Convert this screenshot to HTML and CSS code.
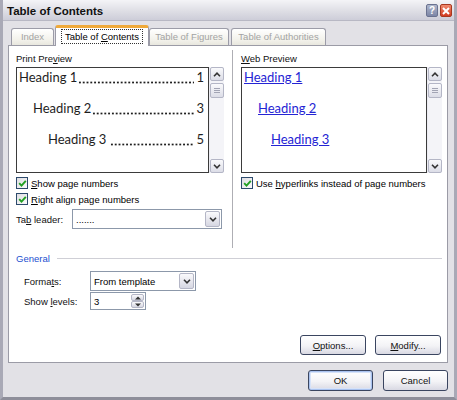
FILE: index.html
```html
<!DOCTYPE html>
<html>
<head>
<meta charset="utf-8">
<link rel="stylesheet" href="styles.css">
</head>
<body>
<div class="window">
  <div class="titlebar">
    <span class="title">Table of Contents</span>
    <span class="tbtn help">?</span>
    <span class="tbtn close"><svg width="8" height="8" viewBox="0 0 8 8"><path d="M1 1 L7 7 M7 1 L1 7" stroke="#fff" stroke-width="2"/></svg></span>
  </div>
  <div class="body">
    <div class="tabs">
      <div class="tab t-index">Index</div>
      <div class="tab sel t-toc"><span class="focus">Table of <u>C</u>ontents</span></div>
      <div class="tab t-fig">Table of Figures</div>
      <div class="tab t-auth">Table of Authorities</div>
    </div>
    <div class="panel">
      <div class="top">
        <div class="col left">
          <div class="label">Print Pre<u>v</u>iew</div>
          <div class="preview">
            <div class="pbox">
              <div class="trow l1"><span>Heading 1</span><span class="dots"></span><span class="pg">1</span></div>
              <div class="trow l2"><span>Heading 2</span><span class="dots"></span><span class="pg">3</span></div>
              <div class="trow l3"><span>Heading 3</span><span class="dots gap"></span><span class="pg">5</span></div>
            </div>
            <div class="scroll">
              <div class="sbtn"><svg width="8" height="5" viewBox="0 0 8 5"><path d="M1 4.2 L4 1.2 L7 4.2" fill="none" stroke="#333" stroke-width="1.6"/></svg></div>
              <div class="thumb"><span></span><span></span><span></span></div>
              <div class="track"></div>
              <div class="sbtn"><svg width="8" height="5" viewBox="0 0 8 5"><path d="M1 0.8 L4 3.8 L7 0.8" fill="none" stroke="#333" stroke-width="1.6"/></svg></div>
            </div>
          </div>
          <div class="chk-row first"><span class="cb"><svg width="9" height="9" viewBox="0 0 9 9"><path d="M1.2 4.2 L3.5 6.6 L7.8 1.8" fill="none" stroke="#22a022" stroke-width="1.9"/></svg></span><span><u>S</u>how page numbers</span></div>
          <div class="chk-row"><span class="cb"><svg width="9" height="9" viewBox="0 0 9 9"><path d="M1.2 4.2 L3.5 6.6 L7.8 1.8" fill="none" stroke="#22a022" stroke-width="1.9"/></svg></span><span><u>R</u>ight align page numbers</span></div>
          <div class="field-row leader">
            <span class="flabel lw">Ta<u>b</u> leader:</span>
            <div class="combo wide"><span class="cval">.......</span><span class="cbtn"><svg width="8" height="5" viewBox="0 0 8 5"><path d="M1 0.8 L4 3.8 L7 0.8" fill="none" stroke="#333" stroke-width="1.6"/></svg></span></div>
          </div>
        </div>
        <div class="vsep"></div>
        <div class="col right">
          <div class="label"><u>W</u>eb Preview</div>
          <div class="preview">
            <div class="pbox web">
              <div class="wrow l1"><a>Heading 1</a></div>
              <div class="wrow l2"><a>Heading 2</a></div>
              <div class="wrow l3"><a>Heading 3</a></div>
            </div>
            <div class="scroll">
              <div class="sbtn"><svg width="8" height="5" viewBox="0 0 8 5"><path d="M1 4.2 L4 1.2 L7 4.2" fill="none" stroke="#333" stroke-width="1.6"/></svg></div>
              <div class="thumb"><span></span><span></span><span></span></div>
              <div class="track"></div>
              <div class="sbtn"><svg width="8" height="5" viewBox="0 0 8 5"><path d="M1 0.8 L4 3.8 L7 0.8" fill="none" stroke="#333" stroke-width="1.6"/></svg></div>
            </div>
          </div>
          <div class="chk-row first"><span class="cb"><svg width="9" height="9" viewBox="0 0 9 9"><path d="M1.2 4.2 L3.5 6.6 L7.8 1.8" fill="none" stroke="#22a022" stroke-width="1.9"/></svg></span><span>Use <u>h</u>yperlinks instead of page numbers</span></div>
        </div>
      </div>
      <div class="general-head"><span>General</span><span class="gline"></span></div>
      <div class="form-rows">
        <div class="field-row">
          <span class="flabel fw">Forma<u>t</u>s:</span>
          <div class="combo fmt"><span class="cval">From template</span><span class="cbtn"><svg width="8" height="5" viewBox="0 0 8 5"><path d="M1 0.8 L4 3.8 L7 0.8" fill="none" stroke="#333" stroke-width="1.6"/></svg></span></div>
        </div>
        <div class="field-row levels">
          <span class="flabel fw">Show <u>l</u>evels:</span>
          <div class="spin"><span class="cval">3</span><span class="spbtns"><span class="spb"><svg width="6" height="4" viewBox="0 0 6 4"><path d="M0 3.5 L3 0.5 L6 3.5 Z" fill="#333"/></svg></span><span class="spb"><svg width="6" height="4" viewBox="0 0 6 4"><path d="M0 0.5 L3 3.5 L6 0.5 Z" fill="#333"/></svg></span></span></div>
        </div>
      </div>
      <div class="btnrow">
        <div class="btn"><u>O</u>ptions...</div>
        <div class="btn"><u>M</u>odify...</div>
      </div>
    </div>
    <div class="footer">
      <div class="btn big default">OK</div>
      <div class="btn big">Cancel</div>
    </div>
  </div>
</div>
</body>
</html>
```
FILE: styles.css
```css
* { box-sizing: border-box; }
body {
  margin: 0;
  font-family: "Liberation Sans", Arial, sans-serif;
  font-size: 9.5px;
  color: #000;
}
u { text-decoration: underline; text-underline-offset: 1px; }
.window {
  width: 457px;
  height: 400px;
  background: #e2e1e6;
  border-left: 3px solid #a9a9b6;
  border-right: 3px solid #a9a9b6;
  border-bottom: 3px solid #8e8e9a;
  display: flex;
  flex-direction: column;
  overflow: hidden;
}
.titlebar {
  height: 21px;
  flex: none;
  display: flex;
  align-items: center;
  padding: 1px 2px 0 4px;
  background: linear-gradient(#f4f4f7, #e2e2e8 45%, #cdcdd8);
  border-bottom: 1px solid #b8b8c4;
}
.title {
  flex: 1;
  font-weight: bold;
  font-size: 11.5px;
  color: #111;
}
.tbtn {
  width: 12px;
  height: 13px;
  border-radius: 2px;
  display: flex;
  align-items: center;
  justify-content: center;
  color: #fff;
  font-weight: bold;
  font-size: 10px;
}
.help {
  background: linear-gradient(#aeb6cc, #7d86a6);
  border: 1px solid #6a7290;
  margin-right: 2px;
}
.close {
  background: linear-gradient(#f08a6e, #d23c22);
  border: 1px solid #a8381f;
}
.body {
  padding: 4px 6px 0 5px;
  display: flex;
  flex-direction: column;
}
.tabs {
  display: flex;
  align-items: flex-end;
  height: 20px;
  position: relative;
  z-index: 1;
}
.tab {
  height: 17px;
  border: 1px solid #9c9ca8;
  border-bottom: 0;
  border-radius: 3px 3px 0 0;
  background: linear-gradient(#ffffff, #f2f1ea 70%, #e8e7de);
  color: #a3a3a3;
  text-align: center;
  line-height: 16px;
}
.t-index { width: 43px; margin-left: 3px; }
.t-toc { width: 94px; margin-left: 1px; }
.t-fig { width: 80px; }
.t-auth { width: 95px; margin-left: 2px; }
.tab.sel {
  height: 21px;
  margin-bottom: -1px;
  background: #fff;
  border-top: 3px solid #efa93a;
  color: #000;
  line-height: 16px;
  padding-top: 1px;
}
.focus {
  border: 1px dotted #333;
  padding: 0 3px;
  display: inline-block;
  line-height: 13px;
}
.panel {
  height: 318px;
  width: 440px;
  background: #fff;
  border: 1px solid #9b9ba6;
  padding: 6px 5px 0 7px;
  display: flex;
  flex-direction: column;
}
.top {
  display: flex;
  height: 200px;
  flex: none;
}
.left { width: 208px; }
.right { width: 201px; }
.vsep {
  width: 1px;
  height: 198px;
  margin: -2px 8px 0 8px;
  background: #aeaeb4;
}
.label {
  height: 13px;
  line-height: 13px;
  margin-bottom: 2px;
  color: #111;
}
.preview {
  display: flex;
  height: 106px;
}
.pbox {
  flex: 1;
  border: 1px solid #3b3b3b;
  background: #fff;
  font-family: Lato, "Open Sans", sans-serif;
  font-size: 13px;
  color: #1e1e1e;
  padding: 0 4px 0 2px;
}
.trow, .wrow {
  display: flex;
  height: 18px;
  line-height: 18px;
  margin-bottom: 13px;
  white-space: nowrap;
}
.trow.l2 { padding-left: 14px; }
.trow.l3 { padding-left: 29px; margin-top: 1px; }
.dots {
  flex: 1;
  margin: 0 2px 0 1px;
  background-image: radial-gradient(circle, #1e1e1e 0.85px, transparent 1.25px);
  background-size: 3.8px 3px;
  background-repeat: repeat-x;
  background-position: 0 12.5px;
}
.dots.gap { margin-left: 4px; }
.pbox.web { padding-left: 2px; }
.wrow a {
  color: #2424d4;
  text-decoration: underline;
}
.wrow.l2 { padding-left: 14px; }
.wrow.l3 { padding-left: 27px; }
.scroll {
  width: 15px;
  display: flex;
  flex-direction: column;
  background: #f4f4f8;
  border-left: 1px solid #ececf2;
}
.sbtn, .thumb {
  height: 14px;
  border: 1px solid #b4b6c6;
  border-radius: 2px;
  background: linear-gradient(#fafafc, #dcdde7);
  display: flex;
  align-items: center;
  justify-content: center;
}
.thumb {
  height: 15px;
  margin-top: 2px;
  flex-direction: column;
  gap: 1px;
}
.thumb span {
  display: block;
  width: 6px;
  height: 1px;
  background: #a2a4b4;
}
.track { flex: 1; }
.chk-row {
  display: flex;
  align-items: center;
  height: 16px;
}
.chk-row.first { margin-top: 2px; }
.cb {
  width: 12px;
  height: 12px;
  border: 1px solid #2d4a6c;
  background: linear-gradient(135deg, #dedee2, #fbfbfb);
  margin-right: 3px;
  display: flex;
  align-items: center;
  justify-content: center;
}
.field-row {
  display: flex;
  align-items: center;
}
.leader { margin-top: 2px; }
.flabel { color: #111; }
.lw { width: 56px; }
.fw { width: 66px; }
.combo {
  height: 20px;
  border: 1px solid #8c98aa;
  background: #fff;
  display: flex;
  align-items: center;
  padding: 1px;
}
.combo.wide { width: 150px; }
.combo.fmt { width: 106px; height: 20px; }
.cval {
  flex: 1;
  padding-left: 2px;
}
.cbtn {
  width: 15px;
  height: 100%;
  border: 1px solid #b4b6c6;
  border-radius: 2px;
  background: linear-gradient(#fafafc, #d6d7e2);
  display: flex;
  align-items: center;
  justify-content: center;
}
.levels { margin-top: 1px; }
.spin {
  width: 56px;
  height: 18px;
  border: 1px solid #8c98aa;
  background: #fff;
  display: flex;
  align-items: center;
  padding: 1px;
}
.spbtns {
  width: 13px;
  height: 100%;
  display: flex;
  flex-direction: column;
}
.spb {
  flex: 1;
  border: 1px solid #b4b6c6;
  border-radius: 2px;
  background: linear-gradient(#fafafc, #d6d7e2);
  display: flex;
  align-items: center;
  justify-content: center;
}
.general-head {
  display: flex;
  align-items: center;
  height: 13px;
  flex: none;
  color: #1c4fd0;
}
.gline {
  flex: 1;
  height: 1px;
  margin-left: 7px;
  background: #cfcfd6;
}
.form-rows {
  padding-left: 8px;
  margin-top: 6px;
}
.btnrow {
  display: flex;
  justify-content: flex-end;
  gap: 9px;
  margin-top: 25px;
  padding-right: 1px;
}
.btn {
  width: 66px;
  height: 20px;
  border: 1px solid #3a4560;
  border-radius: 3px;
  background: linear-gradient(#ffffff, #f3f3f6 55%, #d9d9e3);
  display: flex;
  align-items: center;
  justify-content: center;
  color: #111;
}
.footer {
  display: flex;
  justify-content: flex-end;
  gap: 10px;
  margin-top: 7px;
}
.btn.big {
  width: 65px;
  height: 21px;
}
.btn.default {
  box-shadow: inset 0 0 0 1px #a9c2ef, inset 0 0 0 2px #d6e2f8;
}
```
